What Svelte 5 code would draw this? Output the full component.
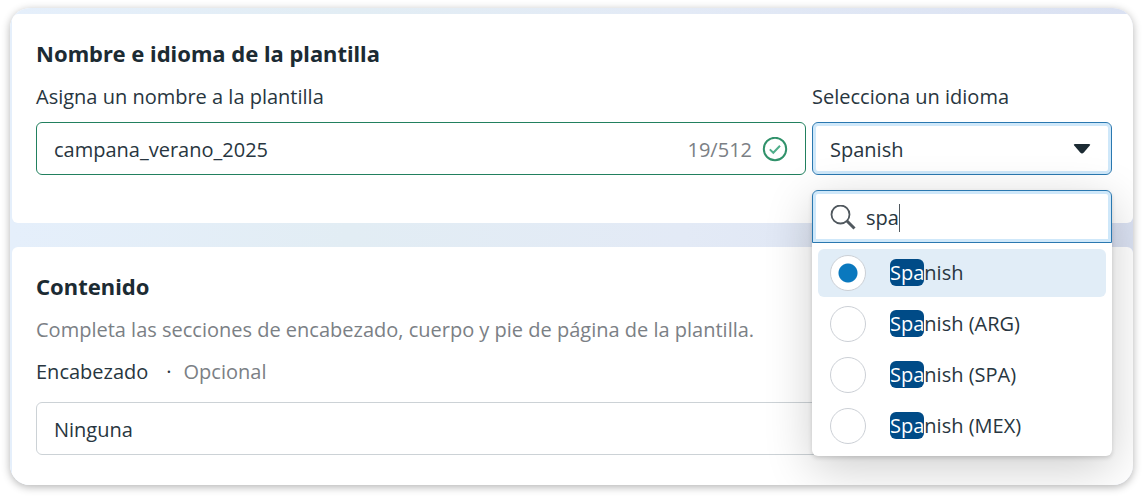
<script>
    let name = 'campana_verano_2025';
    let maxLength = 512;
    let language = 'Spanish';
    let header = 'Ninguna';
    let search = 'spa';

    const languages = ['Spanish', 'Spanish (ARG)', 'Spanish (SPA)', 'Spanish (MEX)'];
    const headers = ['Ninguna', 'Texto', 'Imagen', 'Video', 'Documento'];

    $: results = languages.filter((item) => item.toLowerCase().startsWith(search.toLowerCase()));
</script>

<main>
    <div class="panel">
        <section>
            <h2>Nombre e idioma de la plantilla</h2>
            <div class="fields">
                <div class="name-field">
                    <label for="name">Asigna un nombre a la plantilla</label>
                    <div class="box valid">
                        <input type="text" id="name" maxlength={maxLength} bind:value={name}>
                        <span class="counter">{name.length}/{maxLength}</span>
                        <svg class="check" width="26" height="26" viewBox="0 0 26 26" fill="none" stroke="#31926b" stroke-width="2">
                            <circle cx="13" cy="12" r="11.2" />
                            <path d="M7.8 12.4l3.5 3.4 6.7-7" stroke="#4fae8a" />
                        </svg>
                    </div>
                </div>
                <div class="language-field">
                    <label for="language">Selecciona un idioma</label>
                    <div class="box active">
                        <select id="language" bind:value={language}>
                            {#each languages as item}
                                <option>{item}</option>
                            {/each}
                        </select>
                        <svg class="arrow" width="18" height="12" viewBox="0 0 18 12" fill="#1c2b33">
                            <path d="M2 0h14q2 0 .8 1.5l-6 7q-1.8 1.8-3.6 0l-6-7Q0 0 2 0z" />
                        </svg>
                    </div>
                    <div class="menu">
                        <div class="box active search">
                            <svg width="26" height="26" viewBox="0 0 26 26" fill="none" stroke="#50585e">
                                <circle cx="10.5" cy="9.5" r="9" stroke-width="1.8" />
                                <path d="M17 16l7.5 7.5" stroke-width="3" />
                            </svg>
                            <input type="text" aria-label="Buscar idioma" bind:value={search}>
                            <span class="caret"></span>
                        </div>
                        <div class="options">
                            {#each results as item}
                                <label class="option" class:selected={item === language}>
                                    <input type="radio" name="option" value={item} bind:group={language}>
                                    <span><mark>{item.slice(0, search.length)}</mark>{item.slice(search.length)}</span>
                                </label>
                            {/each}
                        </div>
                    </div>
                </div>
            </div>
        </section>

        <section class="content">
            <h2>Contenido</h2>
            <p>Completa las secciones de encabezado, cuerpo y pie de página de la plantilla.</p>
            <div class="header-label">
                <label for="header">Encabezado</label>
                <span class="dot">·</span>
                <span class="optional">Opcional</span>
            </div>
            <div class="box">
                <select id="header" bind:value={header}>
                    {#each headers as item}
                        <option>{item}</option>
                    {/each}
                </select>
            </div>
        </section>
    </div>
</main>

<style>
    :global(body) {
        background: #fff;
    }

    main {
        padding: 8px 10px 12px;
        font-family: "Open Sans", "Noto Sans", sans-serif;
        font-size: 20px;
        line-height: 28px;
        color: #283640;
    }

    .panel {
        padding: 6px 0 0 2px;
        border-radius: 20px;
        overflow: hidden;
        background: linear-gradient(90deg, #e5effb, #e2edf4 30%, #e3eaf6 60%, #dae1f2);
        box-shadow: 0 2px 8px rgba(0, 0, 0, 0.3);
    }

    section {
        padding: 23px 21px 48px 24px;
        border-radius: 6px;
        background: #fff;
    }

    .content {
        margin-top: 24px;
        padding-bottom: 30px;
    }

    h2 {
        margin: 0 0 14px;
        font-family: "Noto Sans", "Open Sans", sans-serif;
        font-size: 22px;
        line-height: 32px;
        font-weight: 700;
        color: #1c2b33;
    }

    p {
        margin: 0 0 14px;
        color: #7b8085;
    }

    label {
        display: block;
    }

    input,
    select {
        font: inherit;
        color: inherit;
        border: none;
        outline: none;
        padding: 0;
        background: transparent;
    }

    select {
        appearance: none;
        flex: 1;
        min-width: 0;
    }

    .fields {
        display: flex;
        gap: 6px;
    }

    .name-field {
        flex: 1;
        min-width: 0;
    }

    .language-field {
        position: relative;
        width: 300px;
    }

    .fields > div > label {
        margin-bottom: 11px;
    }

    .box {
        display: flex;
        align-items: center;
        box-sizing: border-box;
        height: 53px;
        padding: 2px 17px 0;
        border: 1px solid #ccd2d6;
        border-radius: 6px;
    }

    .valid {
        border-color: #22805f;
    }

    .valid input {
        flex: 1;
        min-width: 0;
    }

    .active {
        border-color: #2a78b0;
        box-shadow: inset 0 0 0 3px #cfe8fa;
    }

    .counter {
        color: #7b8085;
    }

    .check {
        margin-left: 10px;
    }

    .arrow {
        margin-right: 3px;
    }

    .menu {
        position: absolute;
        top: 107px;
        left: 0;
        width: 100%;
        border-radius: 6px;
        background: #fff;
        box-shadow: 0 2px 4px rgba(0, 0, 0, 0.15), 0 12px 48px rgba(0, 0, 0, 0.2);
        z-index: 1;
    }

    .search {
        border-radius: 6px 6px 0 0;
    }

    .search input {
        margin-left: 10px;
        field-sizing: content;
        caret-color: transparent;
    }

    .caret {
        width: 1px;
        height: 28px;
        background: #50585e;
    }

    .options {
        display: flex;
        flex-direction: column;
        gap: 3px;
        padding: 6px;
    }

    .option {
        display: flex;
        align-items: center;
        gap: 24px;
        height: 48px;
        padding: 0 12px;
        border-radius: 6px;
    }

    .selected {
        background: #e1edf7;
    }

    .option input {
        appearance: none;
        box-sizing: border-box;
        flex: none;
        width: 36px;
        height: 36px;
        margin: 0;
        border: 1px solid #ccd0d6;
        border-radius: 50%;
        background: #fff;
    }

    .option input:checked {
        background: radial-gradient(circle, #0a78be 9px, #fff 10px);
    }

    mark {
        border-radius: 6px;
        background: #004b87;
        color: #fff;
    }

    .header-label {
        display: flex;
        margin-bottom: 16px;
    }

    .dot {
        margin: 0 12px 0 18px;
    }

    .optional {
        color: #7b8085;
    }
</style>
